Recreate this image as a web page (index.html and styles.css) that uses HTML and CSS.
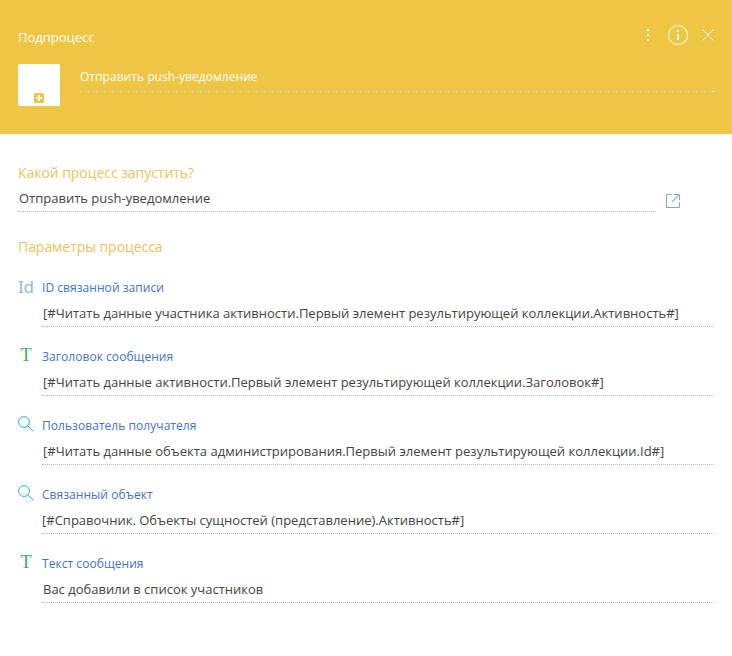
FILE: index.html
```html
<!DOCTYPE html>
<html lang="ru"><head><meta charset="utf-8"><title>Подпроцесс</title><link rel="stylesheet" href="styles.css"></head>
<body>
<header class="header">
  <div class="topbar"><span class="title">Подпроцесс</span>
    <svg class="actions" width="72" height="24" viewBox="0 0 72 24" fill="none" stroke="#fff"><g fill="#fff" stroke="none"><rect x="5" y="6" width="2" height="2"/><rect x="5" y="11" width="2" height="2"/><rect x="5" y="16" width="2" height="2"/><rect x="35" y="7" width="2" height="2"/><rect x="35" y="11" width="2" height="6"/></g><circle cx="36" cy="12" r="9.5"/><path d="M60.5 6.5l11 11M71.5 6.5l-11 11"/></svg>
  </div>
  <div class="identity"><div class="tile"><svg width="10" height="10"><rect width="10" height="10" rx="1.5" fill="#eec643"/><path d="M5 2v6M2 5h6" stroke="#fff" stroke-width="2"/></svg></div><div class="name">Отправить push-уведомление</div></div>
</header>
<main class="content">
  <h2 class="heading">Какой процесс запустить?</h2>
  <div class="process"><div class="value process-value">Отправить push-уведомление</div><svg class="open" width="16" height="16" fill="none"><path d="M6.5 1.5h-5v13h13V9.5M8.5 1.5h6V7" stroke="#84a5c2"/><path d="M14 2L7 9" stroke="#a9b9d8" stroke-width="1.5"/></svg></div>
  <h2 class="heading params">Параметры процесса</h2>
  <section class="field"><span class="icon id">Id</span><div class="body"><div class="label">ID связанной записи</div><div class="value">[#Читать данные участника активности.Первый элемент результирующей коллекции.Активность#]</div></div></section>
  <section class="field"><span class="icon text">T</span><div class="body"><div class="label">Заголовок сообщения</div><div class="value">[#Читать данные активности.Первый элемент результирующей коллекции.Заголовок#]</div></div></section>
  <section class="field"><svg class="icon lookup" width="16" height="16"><circle cx="6" cy="6" r="5.4"/><path d="M10 10l5.5 5.5"/></svg><div class="body"><div class="label">Пользователь получателя</div><div class="value">[#Читать данные объекта администрирования.Первый элемент результирующей коллекции.Id#]</div></div></section>
  <section class="field"><svg class="icon lookup" width="16" height="16"><circle cx="6" cy="6" r="5.4"/><path d="M10 10l5.5 5.5"/></svg><div class="body"><div class="label">Связанный объект</div><div class="value flush">[#Справочник. Объекты сущностей (представление).Активность#]</div></div></section>
  <section class="field"><span class="icon text">T</span><div class="body"><div class="label">Текст сообщения</div><div class="value">Вас добавили в список участников</div></div></section>
</main>
</body></html>
```
FILE: styles.css
```css
* { box-sizing: border-box; }
body { margin: 0; background: #fff; font: 13px/20px "Open Sans", sans-serif; color: #444; }
.header { height: 134px; background: #eec643; color: #fff; padding: 23px 17px 0 18px; }
.topbar { display: flex; justify-content: space-between; height: 41px; }
.actions { margin-right: 1px; }
.title { font-size: 13px; line-height: 29px; }
.identity { display: flex; gap: 20px; }
.tile { width: 42px; height: 42px; background: #fff; border-radius: 2px; display: flex; align-items: flex-end; justify-content: center; padding-bottom: 3px; }
.name { flex: 1; height: 28px; line-height: 26px; font-size: 12px; letter-spacing: 0.04px; border-bottom: 1px dotted #fff; }
.content { padding: 29px 18px 0; }
.heading { margin: 0; font-size: 14px; line-height: 20px; font-weight: 400; letter-spacing: -0.05px; color: #eec35a; }
.process { display: flex; gap: 9px; height: 29px; }
.value { height: 29px; line-height: 30px; padding-left: 1px; border-bottom: 1px dotted #b5b5b5; white-space: nowrap; }
.value.flush { padding-left: 0; }
.process-value { width: 638px; line-height: 31px; }
.open { margin-top: 10px; }
.params { margin: 25px 0 21px; }
.field { display: flex; height: 69px; }
.icon { flex: none; width: 16px; margin-right: 8px; }
.id { color: #8bbbd3; font: 17px/18px "Noto Sans", sans-serif; letter-spacing: -0.3px; }
.text { text-align: center; color: #34b35a; font: 18px/16px "Liberation Serif", serif; }
.lookup { fill: none; stroke: #1fb9dc; }
.body { width: 672px; }
.label { height: 20px; font-size: 12px; letter-spacing: 0.05px; color: #4272cf; }
```
